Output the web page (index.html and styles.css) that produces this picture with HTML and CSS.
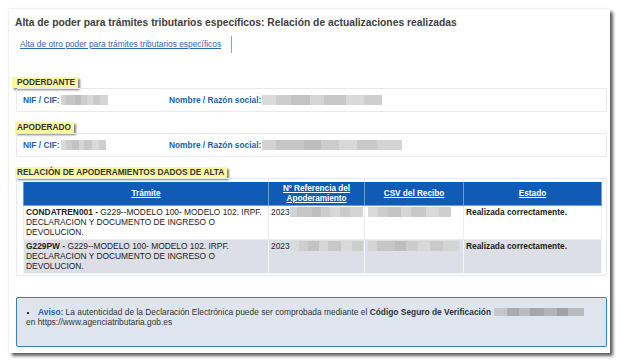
FILE: index.html
```html
<!DOCTYPE html>
<html lang="es">
<head>
    <meta charset="UTF-8">
    <meta name="viewport" content="width=device-width, initial-scale=1.0">
    <title>Relación de actualizaciones realizadas</title>
    <link rel="stylesheet" href="styles.css">
</head>
<body>
    <div class="page">
        <h1 class="title">Alta de poder para trámites tributarios específicos: Relación de actualizaciones realizadas</h1>
        <div class="links">
            <a href="#">Alta de otro poder para trámites tributarios específicos</a>
        </div>

        <div class="label label_first">PODERDANTE</div>
        <div class="panel data_row">
            <div><b>NIF / CIF:</b><span class="blur blur_a" style="width:47px"></span></div>
            <div><b>Nombre / Razón social:</b><span class="blur blur_b" style="width:120px"></span></div>
        </div>

        <div class="label">APODERADO</div>
        <div class="panel data_row">
            <div><b>NIF / CIF:</b><span class="blur blur_b" style="width:45px"></span></div>
            <div><b>Nombre / Razón social:</b><span class="blur blur_a" style="width:140px"></span></div>
        </div>

        <div class="label">RELACIÓN DE APODERAMIENTOS DADOS DE ALTA</div>
        <div class="panel table_panel">
            <table>
                <colgroup>
                    <col style="width:245px">
                    <col style="width:96px">
                    <col style="width:99px">
                    <col style="width:138px">
                </colgroup>
                <thead>
                    <tr>
                        <th><a href="#">Trámite</a></th>
                        <th><a href="#">Nº Referencia del Apoderamiento</a></th>
                        <th><a href="#">CSV del Recibo</a></th>
                        <th><a href="#">Estado</a></th>
                    </tr>
                </thead>
                <tbody>
                    <tr>
                        <td><b>CONDATREN001 -</b> G229--MODELO 100- MODELO 102. IRPF. DECLARACION Y DOCUMENTO DE INGRESO O DEVOLUCION.</td>
                        <td class="ref">2023<span class="blur blur_a" style="width:73px"></span></td>
                        <td><span class="blur blur_b" style="width:83px"></span></td>
                        <td><b>Realizada correctamente.</b></td>
                    </tr>
                    <tr class="odd">
                        <td><b>G229PW -</b> G229--MODELO 100- MODELO 102. IRPF. DECLARACION Y DOCUMENTO DE INGRESO O DEVOLUCION.</td>
                        <td class="ref">2023<span class="blur blur_b" style="width:73px"></span></td>
                        <td><span class="blur blur_a" style="width:91px"></span></td>
                        <td><b>Realizada correctamente.</b></td>
                    </tr>
                </tbody>
            </table>
        </div>

        <div class="notice">
            <ul>
                <li><b class="notice_head">Aviso:</b> La autenticidad de la Declaración Electrónica puede ser comprobada mediante el <b>Código Seguro de Verificación</b> <span class="blur blur_c" style="width:90px"></span><br>en https://www.agenciatributaria.gob.es</li>
            </ul>
        </div>
    </div>
</body>
</html>
```

FILE: styles.css
```css
body {
    margin: 0;
    background: #ffffff;
    font-family: "Liberation Sans", Arial, sans-serif;
    color: #2b2b2b;
    font-size: 8.4px;
    line-height: 10px;
}

.page {
    width: 601px;
    margin: 9px;
    padding: 7px 3px 6px 6px;
    box-sizing: border-box;
    background: #ffffff;
    box-shadow: 3px 3px 3px rgba(0, 0, 0, 0.62), 0 0 2px rgba(0, 0, 0, 0.18);
}

.title {
    margin: 0;
    font-size: 10.3px;
    line-height: 14px;
    font-weight: bold;
    color: #404040;
}

.links {
    display: flex;
    margin-top: 6px;
    padding-left: 5px;
}

.links a {
    padding: 3px 10px 3px 0;
    line-height: 11px;
    color: #2f68b1;
    text-decoration: underline;
    border-right: 1px solid #7ea9d8;
}

.label {
    width: fit-content;
    margin-top: 10px;
    padding: 0 3px 0 2px;
    line-height: 11px;
    font-size: 8.3px;
    font-weight: bold;
    color: #333;
    background: #fbf8a2;
    box-shadow: 1.5px 1.5px 2px rgba(0, 0, 0, 0.5);
}

.label_first {
    margin-top: 24px;
    margin-left: -3px;
    padding-left: 5px;
}

.panel {
    margin-left: 1px;
    border: 1px solid #e6eaf0;
    border-radius: 2px;
}

.data_row {
    display: grid;
    grid-template-columns: 146px 1fr;
    padding: 6px 6px;
    color: #1e5fa9;
}

.data_row b {
    font-size: 8.35px;
}

.blur {
    display: inline-block;
    height: 10px;
    vertical-align: -2px;
    margin-left: 1px;
}

.blur_a {
    background: linear-gradient(90deg, #d3d3d3 0 10%, #c6c6c6 10% 30%, #bdbdbd 30% 42%, #cccccc 42% 55%, #d8d8d8 55% 68%, #c9c9c9 68% 82%, #d4d4d4 82% 100%);
}

.blur_b {
    background: linear-gradient(90deg, #dadada 0 12%, #cdcdcd 12% 24%, #c3c3c3 24% 40%, #d6d6d6 40% 52%, #c8c8c8 52% 70%, #d9d9d9 70% 85%, #cecece 85% 100%);
}

.blur_c {
    height: 8px;
    vertical-align: -1px;
    background: linear-gradient(90deg, #c3c7cc 0 14%, #a9adb2 14% 28%, #b8bcc1 28% 40%, #a4a8ad 40% 56%, #b3b7bc 56% 70%, #9ea2a7 70% 82%, #b7bbc0 82% 100%);
}

.table_panel {
    padding: 3px 5px 1px 6px;
}

table {
    width: 578px;
    table-layout: fixed;
    border-collapse: collapse;
    color: #222;
}

th {
    padding: 2px 2px 1px;
    background: #0f5bb5;
    border: 1px solid #6d9bd6;
    border-top: none;
    text-align: center;
    font-size: 8.2px;
}

th a {
    color: #ffffff;
    text-decoration: underline;
}

td {
    padding: 1px 1px 2px 2px;
    vertical-align: top;
    border: 1px solid #e9edf3;
}

td.ref {
    white-space: nowrap;
    overflow: hidden;
}

td.ref .blur {
    margin-left: 0;
}

tr.odd td {
    background: #dcdfe5;
    border-color: #f3f5f8;
}

.notice {
    margin: 21px 0 0 1px;
    padding: 9px 9px 19px 9px;
    background: #dfe5ee;
    border: 1px solid #3a7cc6;
    border-radius: 2px;
    color: #333;
}

.notice ul {
    margin: 0;
    padding: 0;
    list-style: none;
}

.notice li::before {
    content: "";
    display: inline-block;
    width: 2px;
    height: 2px;
    margin: 0 9px 1px 1px;
    background: #333;
}

.notice_head {
    color: #1a62b3;
}
```
